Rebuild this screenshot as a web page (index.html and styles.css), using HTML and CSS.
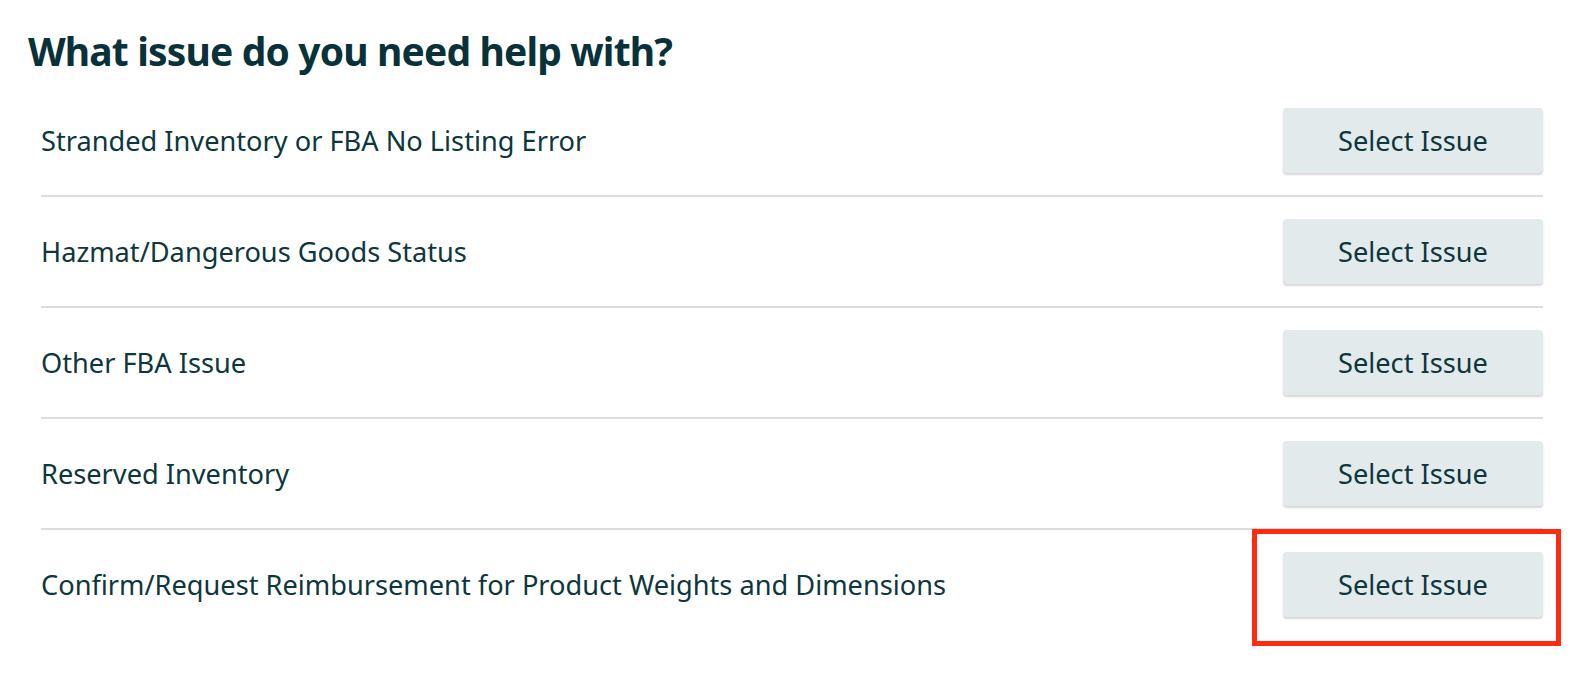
FILE: index.html
```html
<!DOCTYPE html>
<html lang="en">
<head>
<meta charset="utf-8">
<title>What issue do you need help with?</title>
<link rel="stylesheet" href="styles.css">
</head>
<body>
<main class="page">
  <h1 class="title">What issue do you need help with?</h1>
  <ul class="issues">
    <li class="issue">
      <span class="issue-label">Stranded Inventory or FBA No Listing Error</span>
      <span class="btn-wrap"><button class="btn">Select Issue</button></span>
    </li>
    <li class="issue">
      <span class="issue-label">Hazmat/Dangerous Goods Status</span>
      <span class="btn-wrap"><button class="btn">Select Issue</button></span>
    </li>
    <li class="issue">
      <span class="issue-label">Other FBA Issue</span>
      <span class="btn-wrap"><button class="btn">Select Issue</button></span>
    </li>
    <li class="issue">
      <span class="issue-label">Reserved Inventory</span>
      <span class="btn-wrap"><button class="btn">Select Issue</button></span>
    </li>
    <li class="issue">
      <span class="issue-label">Confirm/Request Reimbursement for Product Weights and Dimensions</span>
      <span class="btn-wrap"><button class="btn">Select Issue</button><span class="highlight"></span></span>
    </li>
  </ul>
</main>
</body>
</html>
```
FILE: styles.css
```css
html, body {
  margin: 0;
  padding: 0;
  background: #ffffff;
}

body {
  font-family: "Noto Sans", "Open Sans", Arial, sans-serif;
  color: #0d363d;
}

.page {
  padding: 0 41px 41px 28px;
}

.title {
  margin: 0;
  padding-top: 24px;
  font-size: 39px;
  line-height: 54px;
  font-weight: 700;
  color: #08313a;
  letter-spacing: -0.85px;
}

.issues {
  list-style: none;
  margin: 8px 0 0 13px;
  padding: 0;
}

.issue {
  display: flex;
  align-items: center;
  justify-content: space-between;
  padding: 22px 0;
  border-bottom: 2px solid #d9dede;
}

.issue:last-child {
  border-bottom: none;
}

.issue-label {
  font-size: 27.2px;
  line-height: 36px;
  color: #0d363d;
}

.btn-wrap {
  position: relative;
  display: block;
}

.btn {
  display: block;
  width: 260px;
  height: 65px;
  border: none;
  border-radius: 4px;
  background: #e3eaeb;
  box-shadow: 0 2px 2px rgba(0, 0, 0, 0.16);
  font-family: "Noto Sans", "Open Sans", Arial, sans-serif;
  font-size: 27.2px;
  color: #0d363d;
  padding: 0;
  cursor: pointer;
}

.highlight {
  position: absolute;
  top: -23px;
  left: -31px;
  right: -18px;
  bottom: -29px;
  border: 5px solid #ff2a10;
  pointer-events: none;
}
```
